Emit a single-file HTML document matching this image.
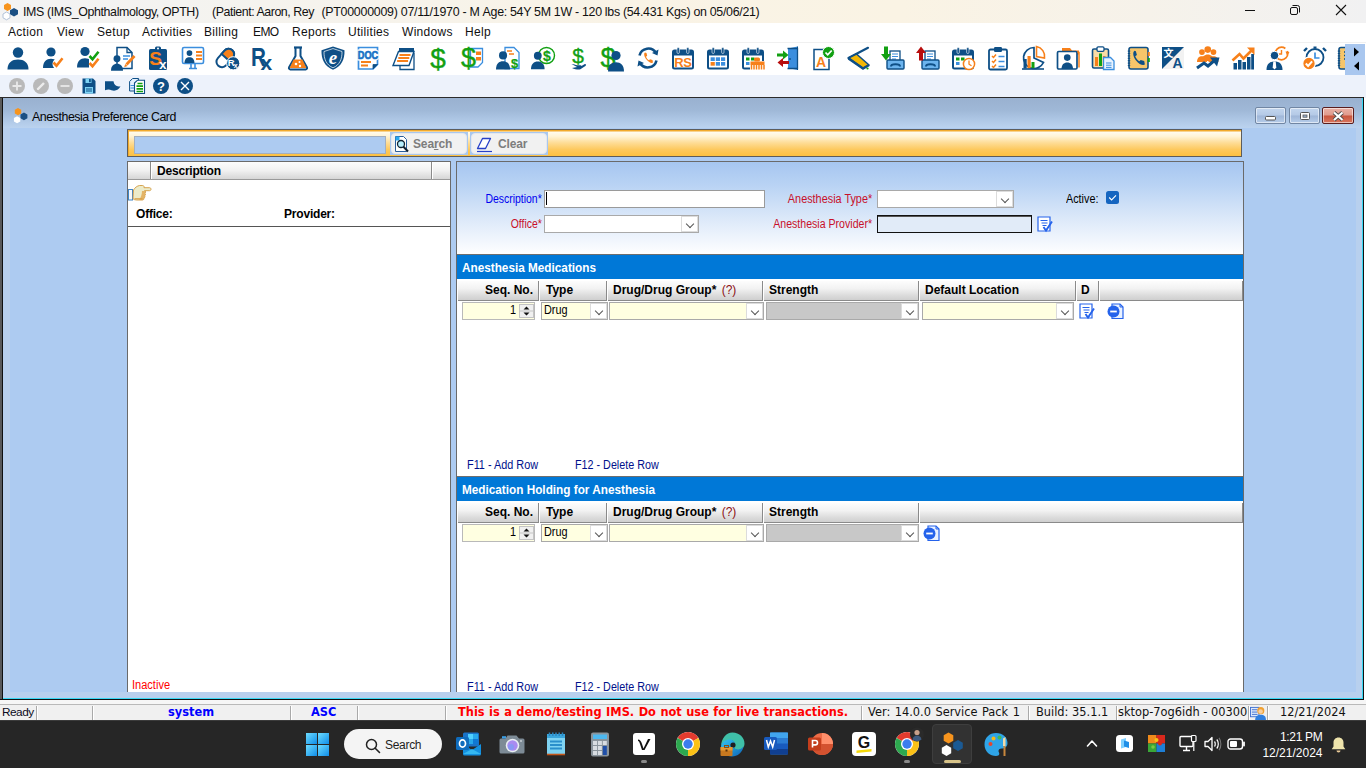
<!DOCTYPE html>
<html lang="en">
<head>
<meta charset="utf-8">
<title>IMS - Anesthesia Preference Card</title>
<style>
*{box-sizing:border-box;margin:0;padding:0}
html,body{width:1366px;height:768px;overflow:hidden;background:#fff;font-family:"Liberation Sans",sans-serif;font-size:12px;color:#000}
.a{position:absolute}
svg{overflow:visible}
.t{position:absolute;white-space:nowrap;line-height:1}
#titlebar{left:0;top:0;width:1366px;height:23px;background:linear-gradient(90deg,#f3f3f3 0,#f4f3f0 180px,#f9f3e6 620px,#faf3e4 900px,#f6f2ea 1150px,#f1f1f2 1366px)}
#menubar{left:0;top:23px;width:1366px;height:19px;background:#fff}
#menubar .t{top:3px;font-size:12px;letter-spacing:.3px;color:#111}
#tb1{left:0;top:42px;width:1366px;height:33px;background:#fff;border-top:1px solid #f0f0f0}
#tb2{left:0;top:75px;width:1366px;height:23px;background:#edf2fb}
#mdi{left:0;top:97px;width:1364px;height:603px;background:#b8d0ee}
#mdititle{left:3px;top:1px;width:1359px;height:30px;background:linear-gradient(180deg,#99b1d0 0,#9fb8d7 40%,#afc8e6 75%,#bbd3ef 100%)}
#client{left:10px;top:127px;width:1346px;height:565px;background:#adcbf1}
#status{left:0;top:704px;width:1366px;height:16px;background:#f0f0f0;border-top:1px solid #b9b9b9;font-family:"DejaVu Sans",sans-serif;font-size:11.400px}
#status .t{top:2px}
#status .sep{position:absolute;top:1px;width:2px;height:14px;background:#fff;border-left:1px solid #a9a9a9}
#taskbar{left:0;top:720px;width:1366px;height:48px;background:#262626}
.wb{position:absolute;top:9px;width:31px;height:17px;border:1px solid #7186a3;border-radius:2px;background:linear-gradient(180deg,#c3d6ee 0,#b4c9e6 48%,#9fb6d8 52%,#b6cdea 100%);box-shadow:inset 0 0 0 1px rgba(255,255,255,.55)}
.wc{width:32px;border-color:#5a1d1d;background:linear-gradient(180deg,#e9b1a6 0,#e09a8c 48%,#c9553d 52%,#d8765f 100%)}
.sbtn{position:absolute;top:2px;height:23px;border:1px solid #a9c7ef;background:#a9c7ef}
.sbtn:before{content:"";position:absolute;left:0;top:0;right:0;bottom:0;border-radius:4px;background:#f1f1f1;border:1px solid #e4e8ee}
.lh{background:linear-gradient(180deg,#fcfcfc 0,#f1f1f1 50%,#d6d6d6 100%);border-bottom:1px solid #9a9a9a}
.nx{display:inline-block;transform:scaleX(.87);transform-origin:left center;font-size:12.5px}
.bx{font-weight:bold}
#l3{transform:scaleX(.905)}#l4{transform:scaleX(.882)}#l5{transform:scaleX(.90)}#f1,#f3{transform:scaleX(.905)}#f2,#f4{transform:scaleX(.897)}
#s1,#s2{display:inline-block;transform:scaleX(.98);transform-origin:left center}
#ldesc,#loff,#lprov{letter-spacing:-.2px}
#linact{display:inline-block;transform:scaleX(.92);transform-origin:left center}
.tt{top:6px;font-size:12.400px;color:#111}
.lbl{position:absolute;white-space:nowrap;line-height:1;font-size:12px}
.red{color:#c8102a}
.blue{color:#0000f0}
.navy{color:#00108c}
.inp{position:absolute;background:#fff;border:1px solid #a9a9a9}
.cmb{position:absolute;background:#fff;border:1px solid #a9a9a9}
.cmb i{position:absolute;right:0;top:0;bottom:0;width:17px;background:#fff;border:1px solid #dcdcdc}
.cmb i:after{content:"";position:absolute;left:4.500px;top:3.500px;width:5px;height:5px;border-right:1px solid #555;border-bottom:1px solid #555;transform:rotate(45deg)}
.yel{background:#ffffe1}
.yel i{background:#fff}
.gry{background:#c8c8c8}
.gry i{background:#fff;border-color:#dcdcdc}
.sechd{position:absolute;width:786px;height:24px;background:#0078d7;color:#fff;font-weight:bold;font-size:12px}
.ghd{position:absolute;width:786px;height:21px;background:#fff}
.ghd b{position:absolute;top:4px;white-space:nowrap;line-height:1;font-size:12px}
.ghd s{position:absolute;top:1px;height:20px;background:linear-gradient(180deg,#fdfdfd 0,#f2f2f2 40%,#dcdcdc 75%,#cfcfcf 100%);border-right:1px solid #8a8a8a;border-bottom:1px solid #8a8a8a;text-decoration:none}
</style>
</head>
<body>
<div id="titlebar" class="a">
<svg class="a" style="left:2px;top:3px" width="17" height="17" viewBox="0 0 17 17"><polygon points="5.5,0 9,2 9,6 5.5,8 2,6 2,2" fill="#f7941d"/><polygon points="12,5 16,7.2 16,11.3 12,13.5 8,11.3 8,7.2" fill="#1b4f83"/><polygon points="4.5,9 8,11 8,14.8 4.5,16.8 1,14.8 1,11" fill="#fff" stroke="#9fb4cf" stroke-width=".8"/></svg>
<span class="t tt" id="ttl" style="left:23px;letter-spacing:-.368px">IMS (IMS_Ophthalmology, OPTH)</span><span class="t tt" style="left:212px;letter-spacing:-.445px">(Patient: Aaron, Rey</span><span class="t tt" style="left:321.400px;letter-spacing:-.252px">(PT00000009) 07/11/1970 - M</span><span class="t tt" style="left:482.600px;letter-spacing:-.3px">Age: 54Y 5M 1W - 120 lbs (54.431 Kgs) on 05/06/21)</span>
<svg class="a" style="left:1244px;top:4px" width="12" height="12" viewBox="0 0 12 12"><path d="M1 6.5h10" stroke="#111" stroke-width="1"/></svg>
<svg class="a" style="left:1289px;top:4px" width="12" height="12" viewBox="0 0 12 12"><rect x="1.5" y="3.5" width="7" height="7" rx="1.5" fill="none" stroke="#111"/><path d="M3.5 1.5h5a2 2 0 0 1 2 2v5" fill="none" stroke="#111"/></svg>
<svg class="a" style="left:1335px;top:4px" width="12" height="12" viewBox="0 0 12 12"><path d="M1 1l10 10M11 1L1 11" stroke="#111" stroke-width="1.1"/></svg>
</div>
<div id="menubar" class="a">
<span class="t" style="left:8px">Action</span><span class="t" style="left:57px">View</span><span class="t" style="left:97px">Setup</span><span class="t" style="left:142px">Activities</span><span class="t" style="left:204px">Billing</span><span class="t" style="left:253px;letter-spacing:-.6px">EMO</span><span class="t" style="left:292px">Reports</span><span class="t" style="left:348px">Utilities</span><span class="t" style="left:402px">Windows</span><span class="t" style="left:465px">Help</span>
</div>
<div id="tb1" class="a">
<svg class="a" style="left:6px;top:3px" width="24" height="24" viewBox="0 0 24 24"><circle cx="12" cy="6.5" r="5.2" fill="#0e4f86"/><path d="M1.5 23.5c0-7 4.5-10 10.5-10s10.5 3 10.5 10z" fill="#0e4f86"/></svg>
<svg class="a" style="left:41px;top:3px" width="24" height="24" viewBox="0 0 24 24"><g transform="translate(2 1) scale(1.0)"><circle cx="8" cy="5" r="4.6" fill="#0e4f86"/><path d="M0 21c0-6.5 3.4-9.3 8-9.3s8 2.8 8 9.3z" fill="#0e4f86"/></g><circle cx="17.5" cy="18" r="6" fill="#fff"/><path d="M12.5 16.5l3 3.2l6 -7.5" fill="none" stroke="#f7801a" stroke-width="2.6"/></svg>
<svg class="a" style="left:76px;top:3px" width="24" height="24" viewBox="0 0 24 24"><g transform="translate(1 0.5) scale(1.0)"><circle cx="8" cy="5" r="4.6" fill="#0e4f86"/><path d="M0 21c0-6.5 3.4-9.3 8-9.3s8 2.8 8 9.3z" fill="#0e4f86"/></g><path d="M13 8l11 0 0 16 -11 0z" fill="#fff"/><path d="M13.5 10l3 3.2l6 -7.5" fill="none" stroke="#12a012" stroke-width="2.6"/><path d="M13.5 17l3 3.2l6 -7.5" fill="none" stroke="#f7801a" stroke-width="2.6"/></svg>
<svg class="a" style="left:111px;top:3px" width="24" height="24" viewBox="0 0 24 24"><path d="M6 1.5h10l5 5v16H6z" fill="#fff" stroke="#0e4f86" stroke-width="1.5"/><path d="M16 1.5v5h5" fill="none" stroke="#0e4f86" stroke-width="1.3"/><path d="M12 10h7M12 13h5" stroke="#3b8ede" stroke-width="1.4"/><g transform="translate(0 9) scale(0.75)"><circle cx="8" cy="5" r="4.6" fill="#0e4f86"/><path d="M0 21c0-6.5 3.4-9.3 8-9.3s8 2.8 8 9.3z" fill="#0e4f86"/></g><path d="M15.5 18.500l8-8.500" stroke="#f7801a" stroke-width="2.800"/><path d="M13.200 21.200l1-3.300 2.300 2.200z" fill="#f7801a"/></svg>
<svg class="a" style="left:146px;top:3px" width="24" height="24" viewBox="0 0 24 24"><rect x="3" y="3" width="18" height="21" rx="1.5" fill="#0e4f86"/><rect x="9" y="0.5" width="6" height="5" rx="1.5" fill="#0e4f86"/><circle cx="12" cy="2.6" r="1" fill="#fff"/><text x="9.5" y="19" font-family="Liberation Sans,sans-serif" font-size="19" font-weight="bold" fill="#f7801a" text-anchor="middle">S</text><text x="16.8" y="22.5" font-family="Liberation Sans,sans-serif" font-size="13" font-weight="bold" fill="#fff" text-anchor="middle">x</text></svg>
<svg class="a" style="left:181px;top:3px" width="24" height="24" viewBox="0 0 24 24"><rect x="1.5" y="1.5" width="21" height="16" rx="1.5" fill="#fff" stroke="#3b8ede" stroke-width="1.6"/><path d="M8 22.5h8M10 18v4M14 18v4" stroke="#3b8ede" stroke-width="1.6"/><g transform="translate(3.5 4) scale(0.62)"><circle cx="8" cy="5" r="4.6" fill="#0e4f86"/><path d="M0 21c0-6.5 3.4-9.3 8-9.3s8 2.8 8 9.3z" fill="#0e4f86"/></g><path d="M15 6h6M15 9.5h6M15 13h6" stroke="#f7801a" stroke-width="2"/></svg>
<svg class="a" style="left:216px;top:3px" width="24" height="24" viewBox="0 0 24 24"><g transform="rotate(-48 10 12)"><rect x="-1" y="6" width="21" height="11" rx="5.5" fill="#fff" stroke="#0e4f86" stroke-width="2"/><path d="M10 6h4.5a5.5 5.500 0 0 1 0 11H10z" fill="#f7801a" stroke="#0e4f86" stroke-width="2"/></g><circle cx="17.2" cy="17.3" r="6.6" fill="#0e4f86" stroke="#fff" stroke-width="1"/><text x="15.3" y="20.3" font-family="Liberation Sans,sans-serif" font-size="9.5" font-weight="bold" fill="#fff" text-anchor="middle">R</text><text x="19.8" y="22" font-family="Liberation Sans,sans-serif" font-size="7" font-weight="bold" fill="#fff" text-anchor="middle">x</text></svg>
<svg class="a" style="left:251px;top:3px" width="24" height="24" viewBox="0 0 24 24"><text transform="translate(0 20.300) scale(.78 1)" font-family="Liberation Sans,sans-serif" font-size="26.500" font-weight="bold" fill="#0e4f86">R</text><text x="9.500" y="24" font-family="Liberation Sans,sans-serif" font-size="21" font-weight="bold" fill="#0e4f86">x</text></svg>
<svg class="a" style="left:286px;top:3px" width="24" height="24" viewBox="0 0 24 24"><path d="M9.5 2v8L3 21.5a1.5 1.5 0 0 0 1.3 2h15.4a1.5 1.5 0 0 0 1.3-2L14.5 10V2" fill="#fff" stroke="#0e4f86" stroke-width="2"/><path d="M7.6 13.5h8.8l4 8.5H3.6z" fill="#f7801a"/><path d="M8 1.5h8" stroke="#0e4f86" stroke-width="2.2"/><circle cx="10" cy="18" r="1.3" fill="#fff"/><circle cx="14" cy="20" r="1.2" fill="#fff"/><circle cx="13.5" cy="16" r="1" fill="#fff"/></svg>
<svg class="a" style="left:321px;top:3px" width="24" height="24" viewBox="0 0 24 24"><path d="M12 0.500l11.500 3.700c.3 9-2.900 16-11.500 19.500C3.400 20.200.2 13.200.5 4.200z" fill="#0e4f86"/><path d="M12 2.600l9 2.900c.2 7.500-2.300 13.500-9 16.300-6.700-2.800-9.200-8.800-9-16.300z" fill="none" stroke="#fff" stroke-width=".7"/><text x="12" y="17.500" font-family="Liberation Serif,serif" font-size="19" font-weight="bold" font-style="italic" fill="#fff" text-anchor="middle">e</text></svg>
<svg class="a" style="left:356px;top:3px" width="24" height="24" viewBox="0 0 24 24"><path d="M2.500 1.500h19v17l-4.500 4.500h-14.500z" fill="#fff" stroke="#3b8ede" stroke-width="1.700"/><path d="M21.500 18.500h-4.500v4.500z" fill="#0e4f86" stroke="#0e4f86" stroke-width=".8"/><text transform="translate(12 13) scale(.8 1)" font-family="Liberation Sans,sans-serif" font-size="11.500" font-weight="bold" fill="#fff" stroke="#fff" stroke-width="3" text-anchor="middle">DOC</text><text transform="translate(12 13) scale(.8 1)" font-family="Liberation Sans,sans-serif" font-size="11.500" font-weight="bold" fill="#1673c6" stroke="#1673c6" stroke-width=".7" text-anchor="middle">DOC</text><path d="M5 16h10M5 19.500h7" stroke="#f7801a" stroke-width="1.800"/></svg>
<svg class="a" style="left:391px;top:3px" width="24" height="24" viewBox="0 0 24 24"><path d="M9 7.500h14v16h-14z" fill="#fff" stroke="#0e4f86" stroke-width="1.300"/><path d="M8 2h15v4h-15z" fill="#0e4f86"/><path d="M7.500 5.500h15.500l-5 14h-16z" fill="#fff" stroke="#0e4f86" stroke-width="1.400"/><path d="M8.500 9h11M7.300 12h11M6.100 15h11" stroke="#f7801a" stroke-width="1.800"/></svg>
<svg class="a" style="left:426px;top:3px" width="24" height="24" viewBox="0 0 24 24"><text x="12" y="21.5" font-family="Liberation Sans,sans-serif" font-size="28" font-weight="normal" fill="#12a012" stroke="#12a012" stroke-width="0.35" text-anchor="middle">$</text></svg>
<svg class="a" style="left:461px;top:3px" width="24" height="24" viewBox="0 0 24 24"><path d="M9.500 2.500h12v14l-4.500 4.500h-7.500z" fill="#fff" stroke="#3b8ede" stroke-width="1.300"/><rect x="15" y="5.500" width="5" height="3.500" fill="#f7801a"/><rect x="15" y="11" width="5" height="3.500" fill="#f7801a"/><text x="7.5" y="21" font-family="Liberation Sans,sans-serif" font-size="27" font-weight="normal" fill="#12a012" stroke="#12a012" stroke-width="0.35" text-anchor="middle">$</text></svg>
<svg class="a" style="left:496px;top:3px" width="24" height="24" viewBox="0 0 24 24"><path d="M9 1.500h9l5 5v16h-14z" fill="#fff" stroke="#3b8ede" stroke-width="1.300"/><path d="M11 5h5M13 8h5" stroke="#f7801a" stroke-width="1.600"/><g transform="translate(0 5) scale(0.88)"><circle cx="8" cy="5" r="4.6" fill="#0e4f86"/><path d="M0 21c0-6.5 3.4-9.3 8-9.3s8 2.8 8 9.3z" fill="#0e4f86"/></g><text x="18.5" y="22" font-family="Liberation Sans,sans-serif" font-size="13" font-weight="bold" fill="#12a012" stroke="#12a012" stroke-width="0.2" text-anchor="middle">$</text></svg>
<svg class="a" style="left:531px;top:3px" width="24" height="24" viewBox="0 0 24 24"><circle cx="15.500" cy="9.500" r="8" fill="#fff" stroke="#12a012" stroke-width="1.400"/><text x="16" y="15" font-family="Liberation Sans,sans-serif" font-size="14" font-weight="bold" fill="#12a012" stroke="#12a012" stroke-width="0.2" text-anchor="middle">$</text><g transform="translate(0 5.5) scale(0.85)"><circle cx="8" cy="5" r="4.6" fill="#0e4f86"/><path d="M0 21c0-6.5 3.4-9.3 8-9.3s8 2.8 8 9.3z" fill="#0e4f86"/></g></svg>
<svg class="a" style="left:566px;top:3px" width="24" height="24" viewBox="0 0 24 24"><text x="12" y="16.5" font-family="Liberation Sans,sans-serif" font-size="21" font-weight="normal" fill="#12a012" stroke="#12a012" stroke-width="0.35" text-anchor="middle">$</text><path d="M5.500 18c3 0 3.500 1.200 6 1.200h3c1.300 0 1.300 1.800-.4 1.800h-3M15 20.200l3.500-2c1.300-.4 2.200.8.900 1.700l-5 3.300c-1.300.7-5 .4-8.400-1.200z" fill="#0e4f86"/></svg>
<svg class="a" style="left:601px;top:3px" width="24" height="24" viewBox="0 0 24 24"><text x="7" y="21" font-family="Liberation Sans,sans-serif" font-size="27" font-weight="normal" fill="#12a012" stroke="#12a012" stroke-width="0.35" text-anchor="middle">$</text><g transform="translate(7 4.5) scale(1.0)"><circle cx="8" cy="5" r="4.6" fill="#0e4f86"/><path d="M0 21c0-6.5 3.4-9.3 8-9.3s8 2.8 8 9.3z" fill="#0e4f86"/></g></svg>
<svg class="a" style="left:636px;top:3px" width="24" height="24" viewBox="0 0 24 24"><path d="M3.500 9.500a9 9 0 0 1 16.500-2.500" fill="none" stroke="#0e4f86" stroke-width="2.600"/><path d="M20.500 14.500a9 9 0 0 1-16.500 2.500" fill="none" stroke="#0e4f86" stroke-width="2.600"/><path d="M22.500 3.500l-1 6-5.500-2.500z" fill="#0e4f86"/><path d="M1.500 20.500l1-6 5.500 2.500z" fill="#0e4f86"/><path d="M9 6.500c-1.500 1-1 4 1.500 7s5 4 6.500 3l-.5-2.500-2.500-.8-1 1c-1-.5-2.500-2-3-3.500l1.200-1-.700-2.700z" fill="#f7801a"/></svg>
<svg class="a" style="left:671px;top:3px" width="24" height="24" viewBox="0 0 24 24"><rect x="2" y="4.5" width="20" height="18" rx="1.5" fill="#fff" stroke="#0e4f86" stroke-width="2"/><rect x="2" y="4.5" width="20" height="5" fill="#0e4f86"/><rect x="6" y="1.5" width="2.4" height="6" rx="1.2" fill="#0e4f86" stroke="#fff" stroke-width=".6"/><rect x="15.6" y="1.5" width="2.4" height="6" rx="1.2" fill="#0e4f86" stroke="#fff" stroke-width=".6"/><text x="12" y="20.800" font-family="Liberation Sans,sans-serif" font-size="13" font-weight="bold" fill="#f7801a" text-anchor="middle" letter-spacing="-.4">RS</text></svg>
<svg class="a" style="left:706px;top:3px" width="24" height="24" viewBox="0 0 24 24"><rect x="2" y="4.5" width="20" height="18" rx="1.5" fill="#fff" stroke="#0e4f86" stroke-width="2"/><rect x="2" y="4.5" width="20" height="5" fill="#0e4f86"/><rect x="6" y="1.5" width="2.4" height="6" rx="1.2" fill="#0e4f86" stroke="#fff" stroke-width=".6"/><rect x="15.6" y="1.5" width="2.4" height="6" rx="1.2" fill="#0e4f86" stroke="#fff" stroke-width=".6"/><rect x="4.6" y="11.3" width="4.2" height="3.7" fill="#3b8ede"/><rect x="9.8" y="11.3" width="4.2" height="3.7" fill="#3b8ede"/><rect x="15.0" y="11.3" width="4.2" height="3.7" fill="#3b8ede"/><rect x="4.6" y="16.0" width="4.2" height="3.7" fill="#f7801a"/><rect x="9.8" y="16.0" width="4.2" height="3.7" fill="#3b8ede"/><rect x="15.0" y="16.0" width="4.2" height="3.7" fill="#3b8ede"/></svg>
<svg class="a" style="left:741px;top:3px" width="24" height="24" viewBox="0 0 24 24"><rect x="2" y="4.5" width="20" height="18" rx="1.5" fill="#fff" stroke="#0e4f86" stroke-width="2"/><rect x="2" y="4.5" width="20" height="5" fill="#0e4f86"/><rect x="6" y="1.5" width="2.4" height="6" rx="1.2" fill="#0e4f86" stroke="#fff" stroke-width=".6"/><rect x="15.6" y="1.5" width="2.4" height="6" rx="1.2" fill="#0e4f86" stroke="#fff" stroke-width=".6"/><rect x="5" y="11.500" width="3.500" height="3" fill="#12a012"/><rect x="10" y="11.500" width="3.500" height="3" fill="#12a012"/><rect x="5" y="16" width="3.500" height="3" fill="#3b8ede"/><rect x="9" y="15" width="15" height="9" fill="#fff"/><rect x="13" y="11.500" width="6" height="4" rx="1.500" fill="#f7801a"/><rect x="9.500" y="15.500" width="14" height="3.500" fill="#f7801a"/><path d="M10.500 19v4.500M13 19v4.500M15.500 19v4.500M18 19v4.500M20.500 19v4.500M23 19v4.500" stroke="#f7801a" stroke-width="1.500"/></svg>
<svg class="a" style="left:776px;top:3px" width="24" height="24" viewBox="0 0 24 24"><path d="M12 2.500l9.500-2v23.500l-9.500-2z" fill="#3b8ede"/><path d="M11.500 2.500h10v20h-10" fill="none" stroke="#0e4f86" stroke-width="1.300"/><path d="M21.500 0.500v23.500" stroke="#0e4f86" stroke-width="1"/><path d="M1 7.500h6v-3l5.500 4.500-5.500 4.500v-3h-6z" fill="#12a012"/><path d="M13 15h-6v-3l-5.500 4.500 5.500 4.500v-3h6z" fill="#b80d0d"/><circle cx="14" cy="13" r=".9" fill="#0e4f86"/></svg>
<svg class="a" style="left:811px;top:3px" width="24" height="24" viewBox="0 0 24 24"><path d="M3 3.500h9l6 6v14h-15z" fill="#fff" stroke="#0e4f86" stroke-width="1.500"/><text x="10" y="21" font-family="Liberation Sans,sans-serif" font-size="14" font-weight="bold" fill="#f7801a" text-anchor="middle">A</text><circle cx="17.500" cy="6.500" r="6" fill="#12a012" stroke="#fff" stroke-width="1"/><path d="M14.500 6.500l2.200 2.300 4-4.300" fill="none" stroke="#fff" stroke-width="1.800"/></svg>
<svg class="a" style="left:846px;top:3px" width="24" height="24" viewBox="0 0 24 24"><path d="M22 1.800L2.500 12" fill="none" stroke="#0e4f86" stroke-width="2.200" stroke-linecap="round"/><path d="M2.500 12l8-4 12.500 11-6 3.500z" fill="#f2b705" stroke="#0e4f86" stroke-width="1.600" stroke-linejoin="round"/><path d="M2.500 12.500l14.500 10 6-3.500" fill="none" stroke="#0e4f86" stroke-width="2.400" stroke-linejoin="round"/><circle cx="21.500" cy="22.500" r="1.100" fill="#12a012"/></svg>
<svg class="a" style="left:881px;top:3px" width="24" height="24" viewBox="0 0 24 24"><rect x="9" y="5" width="10" height="11" fill="#fff" stroke="#0e4f86" stroke-width="1.3"/><path d="M11 8h6M11 10.5h6M11 13h4" stroke="#3b8ede" stroke-width="1.2"/><rect x="6" y="14" width="17" height="9" rx="1" fill="#6cb4ee" stroke="#0e4f86" stroke-width="1.4"/><path d="M10 20.5c0-3 9-3 9 0" stroke="#0e4f86" stroke-width="2" fill="none"/><path d="M2.500 0.500h4v7.500h3l-5 6.500-5-6.500h3z" fill="#12a012" transform="translate(.5 0)"/></svg>
<svg class="a" style="left:916px;top:3px" width="24" height="24" viewBox="0 0 24 24"><rect x="9" y="5" width="10" height="11" fill="#fff" stroke="#0e4f86" stroke-width="1.3"/><path d="M11 8h6M11 10.5h6M11 13h4" stroke="#3b8ede" stroke-width="1.2"/><rect x="6" y="14" width="17" height="9" rx="1" fill="#6cb4ee" stroke="#0e4f86" stroke-width="1.4"/><path d="M10 20.5c0-3 9-3 9 0" stroke="#0e4f86" stroke-width="2" fill="none"/><path d="M2.500 14.500h4v-7.500h3l-5-6.500-5 6.500h3z" fill="#b80d0d" transform="translate(.5 0)"/></svg>
<svg class="a" style="left:951px;top:3px" width="24" height="24" viewBox="0 0 24 24"><rect x="2" y="4.5" width="20" height="18" rx="1.5" fill="#fff" stroke="#0e4f86" stroke-width="2"/><rect x="2" y="4.5" width="20" height="5" fill="#0e4f86"/><rect x="6" y="1.5" width="2.4" height="6" rx="1.2" fill="#0e4f86" stroke="#fff" stroke-width=".6"/><rect x="15.6" y="1.5" width="2.4" height="6" rx="1.2" fill="#0e4f86" stroke="#fff" stroke-width=".6"/><rect x="5" y="11.500" width="3.500" height="3" fill="#12a012"/><rect x="10" y="11.500" width="3.500" height="3" fill="#12a012"/><rect x="5" y="16" width="3.500" height="3" fill="#3b8ede"/><circle cx="18" cy="18" r="5.600" fill="#fff" stroke="#f7801a" stroke-width="1.500"/><path d="M18 14.500v3.700l2.500 1.500" fill="none" stroke="#f7801a" stroke-width="1.300"/></svg>
<svg class="a" style="left:986px;top:3px" width="24" height="24" viewBox="0 0 24 24"><rect x="3" y="3.500" width="18" height="20" rx="1.500" fill="#fff" stroke="#0e4f86" stroke-width="1.800"/><rect x="8" y="1" width="8" height="5" rx="1.200" fill="#0e4f86"/><path d="M6 10l1.500 1.500 2.500-3M6 15l1.500 1.500 2.500-3M6 20l1.500 1.500 2.500-3" fill="none" stroke="#f7801a" stroke-width="1.500"/><path d="M12.500 10.500h6M12.500 15.500h6M12.500 20.500h6" stroke="#3b8ede" stroke-width="1.600"/></svg>
<svg class="a" style="left:1021px;top:3px" width="24" height="24" viewBox="0 0 24 24"><path d="M13 1.500a10.500 10.500 0 1 0 9.500 15l-9.500-4.500z" fill="#fff" stroke="#0e4f86" stroke-width="1.700"/><path d="M15.500 0.500a10 10 0 0 1 8 11.500l-8-1.500z" fill="#fff" stroke="#f7801a" stroke-width="1.600"/><rect x="2.500" y="13" width="3.200" height="9.500" fill="#0e4f86"/><rect x="6.500" y="10" width="3.200" height="12.500" fill="#f7801a"/><rect x="10.500" y="16" width="3" height="6.500" fill="#12a012"/><path d="M1 23h22" stroke="#0e4f86" stroke-width="1.600"/></svg>
<svg class="a" style="left:1056px;top:3px" width="24" height="24" viewBox="0 0 24 24"><path d="M6 2h8l2 2.500h7v4h-17z" fill="#f7801a"/><rect x="1.500" y="5.500" width="19.500" height="17.500" rx="1.200" fill="#fff" stroke="#0e4f86" stroke-width="1.700"/><path d="M21.500 6.500h1.500v15" stroke="#f7801a" stroke-width="1.500" fill="none"/><g transform="translate(5.5 8) scale(0.72)"><circle cx="8" cy="5" r="4.6" fill="#0e4f86"/><path d="M0 21c0-6.5 3.4-9.3 8-9.3s8 2.8 8 9.3z" fill="#0e4f86"/></g></svg>
<svg class="a" style="left:1091px;top:3px" width="24" height="24" viewBox="0 0 24 24"><rect x="1.500" y="3" width="16" height="19" rx="1.500" fill="#f9dca6" stroke="#0e4f86" stroke-width="1.600"/><rect x="6" y="0.800" width="7" height="4.500" rx="1.200" fill="#fff" stroke="#0e4f86" stroke-width="1.300"/><rect x="4" y="11" width="3" height="9" fill="#f7801a"/><rect x="8" y="7.500" width="3" height="12.500" fill="#12a012"/><rect x="12" y="10" width="2.500" height="10" fill="#f7801a"/><path d="M12.500 11.500h7l3.500 3.500v8.500h-10.500z" fill="#e8f3ff" stroke="#3b8ede" stroke-width="1.300"/><path d="M15 17h5.500M15 19.200h5.500M15 21.400h5.500" stroke="#3b8ede" stroke-width="1"/></svg>
<svg class="a" style="left:1126px;top:3px" width="24" height="24" viewBox="0 0 24 24"><rect x="3" y="1.500" width="19" height="21.500" rx="2" fill="#f6c56a" stroke="#0e4f86" stroke-width="1.600"/><path d="M3 4.500v16" stroke="#0e4f86" stroke-width="2.400" stroke-dasharray="1.200 1.200"/><path d="M22.800 6v4" stroke="#f7801a" stroke-width="2"/><path d="M22.800 12v4" stroke="#12a012" stroke-width="2"/><g transform="translate(13 11.800) scale(1.300) translate(-13 -11.500)"><path d="M9.500 6c-1.500 1-1.200 4.500 1.200 7.500s5.300 4.200 6.800 3.200l-.5-2.700-2.700-.8-1 1c-1.200-.6-2.600-2.200-3.200-3.800l1.300-1-.8-3z" fill="#0e4f86"/></g></svg>
<svg class="a" style="left:1161px;top:3px" width="24" height="24" viewBox="0 0 24 24"><path d="M1 1h22v22h-22z" fill="#f2f2f2"/><path d="M1 1h22l-22 22z" fill="#0e4f86"/><text x="7.500" y="11" font-family="Liberation Sans,Noto Sans CJK SC,sans-serif" font-size="10" font-weight="bold" fill="#fff" text-anchor="middle">文</text><text x="16.500" y="22" font-family="Liberation Sans,sans-serif" font-size="14" font-weight="bold" fill="#0e4f86" text-anchor="middle">A</text></svg>
<svg class="a" style="left:1196px;top:3px" width="24" height="24" viewBox="0 0 24 24"><g transform="translate(1 3) scale(0.62)"><circle cx="8" cy="5" r="4.6" fill="#f7801a"/><path d="M0 21c0-6.5 3.4-9.3 8-9.3s8 2.8 8 9.3z" fill="#f7801a"/></g><g transform="translate(12.5 3) scale(0.62)"><circle cx="8" cy="5" r="4.6" fill="#f7801a"/><path d="M0 21c0-6.5 3.4-9.3 8-9.3s8 2.8 8 9.3z" fill="#f7801a"/></g><g transform="translate(6 0) scale(0.72)"><circle cx="8" cy="5" r="4.6" fill="#f7801a"/><path d="M0 21c0-6.5 3.4-9.3 8-9.3s8 2.8 8 9.3z" fill="#f7801a"/></g><path d="M1 22l7-5 4 3 7-6" fill="none" stroke="#0e4f86" stroke-width="3"/><path d="M14 11.500h9.500l-2.500 9z" fill="#0e4f86"/></svg>
<svg class="a" style="left:1231px;top:3px" width="24" height="24" viewBox="0 0 24 24"><rect x="2.500" y="17" width="3.500" height="6.500" fill="#0e4f86"/><rect x="7" y="14" width="3.500" height="9.500" fill="#0e4f86"/><rect x="11.500" y="16" width="3.500" height="7.500" fill="#0e4f86"/><rect x="16" y="11" width="3.500" height="12.500" fill="#0e4f86"/><rect x="20.200" y="8" width="2.800" height="15.500" fill="#0e4f86"/><path d="M1.500 14.500l7-6.500 4 4.500 8-8" fill="none" stroke="#f7801a" stroke-width="2.600"/><path d="M16 1.500h7.500v7.500z" fill="#f7801a"/></svg>
<svg class="a" style="left:1266px;top:3px" width="24" height="24" viewBox="0 0 24 24"><circle cx="15.500" cy="7.500" r="6.300" fill="#fff" stroke="#f7801a" stroke-width="1.700" stroke-dasharray="15 3"/><path d="M15.500 4v4h-2.500" fill="none" stroke="#f7801a" stroke-width="1.400"/><path d="M21 9.500l2.500-3.500-4-.5z" fill="#f7801a"/><circle cx="8.500" cy="9.500" r="4.200" fill="#0e4f86" stroke="#fff" stroke-width="1"/><path d="M0.500 24c0-6 3-8.500 8-8.500s8 2.500 8 8.500z" fill="#0e4f86"/><path d="M7.300 15.500h2.400l.6 6-1.800 2-1.800-2z" fill="#fff"/></svg>
<svg class="a" style="left:1301px;top:3px" width="24" height="24" viewBox="0 0 24 24"><circle cx="14" cy="11.500" r="8.500" fill="#fff" stroke="#0e4f86" stroke-width="1.800"/><path d="M14 6.500v5.500h4.500" fill="none" stroke="#3b8ede" stroke-width="1.700"/><path d="M6 2l-3 3M22 2l3 3" stroke="#0e4f86" stroke-width="2.400"/><path d="M12.500 1.500h3" stroke="#0e4f86" stroke-width="2"/><circle cx="8" cy="17.500" r="6.300" fill="#f7801a" stroke="#fff" stroke-width="1.300"/><path d="M4.800 17.500l2.300 2.400 4-4.600" fill="none" stroke="#fff" stroke-width="2"/></svg>
<svg class="a" style="left:1336px;top:3px" width="24" height="24" viewBox="0 0 24 24"><rect x="3" y="1.500" width="19" height="21.500" rx="2" fill="#f6c56a" stroke="#0e4f86" stroke-width="1.600"/><path d="M3 4.500v16" stroke="#0e4f86" stroke-width="2.400" stroke-dasharray="1.200 1.200"/><path d="M8 6h5M8 9.500h5M8 13h5" stroke="#0e4f86" stroke-width="1.500"/></svg>
<div class="a" style="left:1345px;top:1px;width:20px;height:31px;background:#a9c7ef"><svg class="a" style="left:0;top:0" width="20" height="31" viewBox="0 0 20 31"><path d="M9 3.500l5 4.500-5 4.500z" fill="#000"/><path d="M14 17.500l-5 4.500 5 4.500z" fill="#000"/></svg></div>
</div>
<div id="tb2" class="a">
<svg class="a" style="left:9px;top:3px" width="16" height="16" viewBox="0 0 16 16"><circle cx="8" cy="8" r="8" fill="#b9b9b9"/><path d="M8 3.500v9M3.500 8h9" stroke="#e9e9e9" stroke-width="1.800"/></svg>
<svg class="a" style="left:33px;top:3px" width="16" height="16" viewBox="0 0 16 16"><circle cx="8" cy="8" r="8" fill="#b9b9b9"/><path d="M4.500 11.500l6.500-6.500" stroke="#ececec" stroke-width="2.400"/><path d="M4 12l.3-1.500 1.200 1.200z" fill="#ececec"/></svg>
<svg class="a" style="left:57px;top:3px" width="16" height="16" viewBox="0 0 16 16"><circle cx="8" cy="8" r="8" fill="#b9b9b9"/><path d="M3.500 8h9" stroke="#e9e9e9" stroke-width="1.800"/></svg>
<svg class="a" style="left:81px;top:3px" width="16" height="16" viewBox="0 0 16 16"><path d="M1.500 0.500h10.500l2.500 2.500v12.500h-13z" fill="#0e4f86"/><rect x="4.500" y="0.500" width="6" height="4.500" fill="#7dd3f5"/><rect x="8" y="1" width="1.800" height="3.200" fill="#0e4f86"/><rect x="4" y="9" width="8" height="6.500" fill="#7dd3f5"/><path d="M5 11h6M5 13h6" stroke="#0e4f86" stroke-width="1"/></svg>
<svg class="a" style="left:105px;top:3px" width="16" height="16" viewBox="0 0 16 16"><path d="M0 3.300L8.500 3.300C9 7 11.500 9.300 15.500 8.300C14 12 10 13.500 6.500 12.200C4.500 11.400 2.500 11.400 0 12.300Z" fill="#0e4f86"/></svg>
<svg class="a" style="left:129px;top:3px" width="16" height="16" viewBox="0 0 16 16"><path d="M0.600 3.500l3-3h6v12.500h-9z" fill="#e4f1ff" stroke="#0e4f86" stroke-width="1"/><path d="M1.500 7.500h3.500M1.500 10h3.500" stroke="#3b8ede" stroke-width="1.200"/><path d="M5.500 5l3-2.800h7v13.300h-10z" fill="#fff" stroke="#0e4f86" stroke-width="1.100"/><path d="M8.500 5.500h5M7.500 8.200h6.500M7.500 10.900h6.500M7.500 13.500h6.500" stroke="#12a012" stroke-width="1.700"/></svg>
<svg class="a" style="left:153px;top:3px" width="16" height="16" viewBox="0 0 16 16"><circle cx="8" cy="8" r="8" fill="#0e4f86"/><text x="8" y="12.500" font-family="Liberation Sans,sans-serif" font-size="13" font-weight="bold" fill="#fff" text-anchor="middle">?</text></svg>
<svg class="a" style="left:177px;top:3px" width="16" height="16" viewBox="0 0 16 16"><circle cx="8" cy="8" r="8" fill="#0e4f86"/><path d="M4 4l8 8M12 4l-8 8" stroke="#fff" stroke-width="1.400"/></svg>
</div>
<div id="mdi" class="a">
<div class="a" style="left:0;top:0;width:3px;height:603px;background:#5a5a5a;border-right:1px solid #111"></div>
<div class="a" style="left:0;top:0;width:1364px;height:1px;background:#2b2b2b"></div>
<div class="a" style="left:1363px;top:0;width:1px;height:603px;background:#111"></div>
<div class="a" style="left:1362px;top:1px;width:1px;height:601px;background:#38d8f4"></div>
<div class="a" style="left:3px;top:601px;width:1360px;height:1px;background:#38d8f4"></div>
<div class="a" style="left:0;top:602px;width:1364px;height:1px;background:#111"></div>
<div id="mdititle" class="a">
<svg class="a" style="left:9.500px;top:10px" width="15.500" height="15.500" viewBox="0 0 17 17"><polygon points="5.5,0 9,2 9,6 5.5,8 2,6 2,2" fill="#f7941d"/><polygon points="12,5 15.800,7.200 15.800,11.300 12,13.500 8.200,11.300 8.200,7.200" fill="#1b4f83"/><polygon points="4.500,9 8,11 8,14.800 4.500,16.800 1,14.800 1,11" fill="#fff"/></svg>
<span class="t" id="mdit" style="left:29px;top:13px;font-size:12.400px;letter-spacing:-.45px;color:#050505">Anesthesia Preference Card</span>
<div class="wb" style="left:1251.500px"><svg width="31" height="17" viewBox="0 0 31 17" class="a" style="left:0;top:0"><rect x="9.500" y="8.500" width="10" height="3.500" rx="1" fill="#fff" stroke="#555" stroke-width="1"/></svg></div>
<div class="wb" style="left:1285.500px"><svg width="31" height="17" viewBox="0 0 31 17" class="a" style="left:0;top:0"><rect x="10.500" y="4.500" width="9" height="7" rx="1" fill="#fff" stroke="#555" stroke-width="1"/><rect x="13" y="7" width="4" height="2.200" fill="#9db4d2" stroke="#555" stroke-width=".8"/></svg></div>
<div class="wb wc" style="left:1319px"><svg width="32" height="17" viewBox="0 0 32 17" class="a" style="left:0;top:0"><path d="M11 4.500l8.500 7.500M19.500 4.500l-8.500 7.500" stroke="#4a4a4a" stroke-width="3.800"/><path d="M11 4.500l8.500 7.500M19.500 4.500l-8.500 7.500" stroke="#fff" stroke-width="2.200"/></svg></div>
</div>
</div>
<div id="client" class="a">
<div class="a" style="left:0;top:0;width:1346px;height:1px;background:#bad2ee"></div>
<!-- orange search bar -->
<div id="obar" class="a" style="left:117px;top:2px;width:1115px;height:28px;border:1px solid #5c5c5c;box-shadow:inset 1px 1px 0 #f2aa2c;background:linear-gradient(180deg,#f2aa2c 0,#f2aa2c 1px,#fffbee 2px,#fff3d4 25%,#fedc94 50%,#fdc95e 75%,#fdc040 100%)">
<div class="a" style="left:6px;top:6px;width:252px;height:18px;background:#adcbf1;border:1px solid #a3afc0"></div>
<div class="sbtn" style="left:262px;width:78px"><svg class="a" style="left:3px;top:3px" width="16" height="17" viewBox="0 0 16 17"><path d="M1.500 0.500h8l3 3v12h-11z" fill="#fff" stroke="#2a5e9c" stroke-width="1"/><path d="M1.500 0.500h4v4h-4z" fill="#29a8f0"/><circle cx="7" cy="8" r="3.500" fill="#b8f0ff" stroke="#123" stroke-width="1.300"/><path d="M9.500 10.800l4.500 4.700" stroke="#123" stroke-width="2"/></svg><span class="t" style="left:22px;top:5px;font-size:12px;font-weight:bold;color:#7d7d7d;letter-spacing:-.15px">Sea<u>r</u>ch</span></div>
<div class="sbtn" style="left:342px;width:78px"><svg class="a" style="left:5px;top:4px" width="18" height="16" viewBox="0 0 18 16"><path d="M6.500 1.500h8l-5 10h-8z" fill="#fff" stroke="#2740c8" stroke-width="1.300" stroke-linejoin="round"/><path d="M1 14.500h15" stroke="#2740c8" stroke-width="1.200"/></svg><span class="t" style="left:27px;top:5px;font-size:12px;font-weight:bold;color:#7d7d7d;letter-spacing:-.15px">Clear</span></div>
</div>
<!-- left list panel -->
<div id="lp" class="a" style="left:117px;top:34px;width:324px;height:531px;background:#fff;border:1px solid #6a6a6a;border-bottom:0">
<div class="a lh" style="left:0;top:0;width:322px;height:18px"></div>
<div class="a" style="left:22px;top:0;width:1px;height:17px;background:#8a8a8a"></div><div class="a" style="left:23px;top:0;width:1px;height:17px;background:#fff"></div>
<div class="a" style="left:303px;top:0;width:1px;height:17px;background:#8a8a8a"></div><div class="a" style="left:304px;top:0;width:1px;height:17px;background:#fff"></div>
<span class="t" id="ldesc" style="left:29px;top:3px;font-size:12px;font-weight:bold">Description</span>
<svg class="a" style="left:0;top:22px" width="24" height="18" viewBox="0 0 24 18"><rect x="0.500" y="5.500" width="4" height="10.500" fill="#f4f8fc" stroke="#3f86c8" stroke-width="1"/><path d="M5.500 6C7 3.500 9 2 11.500 1.500h3c1.500 0 1.800 1.200 1.500 2.200h5.500c2 0 2 3 0 3h-5c1.500.3 1.500 2.200.2 2.500 1.200.5 1 2.300-.3 2.500.9.600.6 2.200-.7 2.300.5.800 0 2-1.200 2h-6c-1.500 0-2.500-.5-3.500-1.200z" fill="#ecebc9" stroke="#d39a3e" stroke-width=".9"/><path d="M14 7h2.500c1.500.3 1.500 2.200.2 2.500 1.200.5 1 2.300-.3 2.500.9.600.6 2.200-.7 2.300.5.800 0 1.700-1.200 1.700h-3.500c1.800-2 3-5.500 3-9z" fill="#e2aa55" opacity=".85"/><path d="M6.500 14.800h8" stroke="#d9a047" stroke-width="1.200"/></svg>
<span class="t" id="loff" style="left:8px;top:46px;font-size:12px;font-weight:bold">Office:</span>
<span class="t" id="lprov" style="left:156px;top:46px;font-size:12px;font-weight:bold">Provider:</span>
<div class="a" style="left:0;top:64px;width:322px;height:1px;background:#555"></div>
<span class="t" id="linact" style="left:4px;top:517px;font-size:12px;color:#ff0000">Inactive</span>
</div>
<div id="rp" class="a" style="left:446px;top:34px;width:788px;height:531px;background:#fff;border:1px solid #6a6a6a;border-bottom:0">
<div class="a" style="left:0;top:0;width:786px;height:93px;background:linear-gradient(180deg,#a6c6f0 0,#b9d3f4 25%,#dbe8f9 60%,#f6f9fe 90%,#fff 100%)"></div>
</div>
<!--RPI0-->
<span class="lbl nx blue" id="l1" style="right:814px;top:66px;transform-origin:right center">Description*</span>
<div class="inp" style="left:534px;top:63px;width:221px;height:18px;border-color:#9a9a9a"><div class="a" style="left:1px;top:1px;width:1px;height:13px;background:#000"></div></div>
<span class="lbl nx red" id="l2" style="right:814px;top:91px;transform-origin:right center">Office*</span>
<div class="cmb " style="left:534px;top:88px;width:155px;height:18px"><i></i></div>
<span class="lbl nx red" id="l3" style="right:484px;top:66px;transform-origin:right center">Anesthesia Type*</span>
<div class="cmb " style="left:867px;top:63px;width:137px;height:18px"><i></i></div>
<span class="lbl nx red" id="l4" style="right:484px;top:91px;transform-origin:right center">Anesthesia Provider*</span>
<div class="inp" style="left:867px;top:88px;width:155px;height:18px;border:1px solid #111;box-shadow:inset 0 1px 0 #555;background:#e1ebf8"></div>
<svg class="a" style="left:1027px;top:89px" width="17" height="17" viewBox="0 0 17 17"><path d="M1 1h12v14h-12z" fill="#fff" stroke="#2563eb" stroke-width="1.200"/><path d="M3.500 4.500h7M4.500 7h6M5.500 9.500h4" stroke="#2563eb" stroke-width="1.100"/><path d="M6.500 11l2.500 3.500 6-9" fill="none" stroke="#2563eb" stroke-width="1.900"/></svg>
<span class="lbl nx" id="l5" style="left:1056px;top:66px;transform-origin:left center">Active:</span>
<div class="a" style="left:1096px;top:64px;width:13px;height:13px;border-radius:2.500px;background:#1565c0"><svg class="a" style="left:0;top:0" width="13" height="13" viewBox="0 0 13 13"><path d="M3.200 6.500l2.400 2.400 4.400-4.600" fill="none" stroke="#fff" stroke-width="1.100"/></svg></div>
<div class="a" style="left:447px;top:127px;width:786px;height:1px;background:#6e6e6e"></div>
<div class="sechd" style="left:447px;top:128px"><span class="t bx" id="s1" style="left:5px;top:7px">Anesthesia Medications</span></div>
<div class="ghd" style="left:447px;top:153px"><s style="left:1px;width:81px"></s><s style="left:83px;width:67px"></s><s style="left:151px;width:155px"></s><s style="left:307px;width:155px"></s><s style="left:463px;width:156px"></s><s style="left:620px;width:22px"></s><s style="left:643px;width:143px"></s><b style="left:-457px;right:710px;left:auto">Seq. No.</b><b style="left:89px;">Type</b><b style="left:156px;">Drug/Drug Group* <span style="font-weight:normal;color:#8c0f14;margin-left:2px">(?)</span></b><b style="left:312px;">Strength</b><b style="left:468px;">Default Location</b><b style="left:624px;">D</b></div>
<div class="inp yel" style="left:452px;top:175px;width:73px;height:18px;border-color:#b9b9b9"><span class="t nx" style="right:18px;top:1px;transform-origin:right center">1</span><div class="a" style="left:56px;top:1px;width:15px;height:14px;background:#f0f0f0;border:1px solid #c4c4c4"><svg class="a" style="left:0;top:0" width="13" height="12" viewBox="0 0 13 12"><path d="M0 6h13" stroke="#c4c4c4"/><path d="M3.500 4.500l3-3 3 3zM3.500 7.500l3 3 3-3z" fill="#111"/></svg></div></div>
<div class="cmb yel" style="left:531px;top:175px;width:67px;height:18px"><span class="t nx" style="left:2px;top:1px">Drug</span><i></i></div>
<div class="cmb yel" style="left:599px;top:175px;width:155px;height:18px"><i></i></div>
<div class="cmb gry" style="left:756px;top:175px;width:153px;height:18px"><i></i></div>
<div class="cmb yel" style="left:912px;top:175px;width:152px;height:18px"><i></i></div>
<svg class="a" style="left:1069px;top:176px" width="17" height="17" viewBox="0 0 17 17"><path d="M1 1h12v14h-12z" fill="#fff" stroke="#2563eb" stroke-width="1.200"/><path d="M3.500 4.500h7M4.500 7h6M5.500 9.500h4" stroke="#2563eb" stroke-width="1.100"/><path d="M6.500 11l2.500 3.500 6-9" fill="none" stroke="#2563eb" stroke-width="1.900"/></svg>
<svg class="a" style="left:1097px;top:176px" width="17" height="17" viewBox="0 0 17 17"><path d="M5 1h8l3 3v11.500h-11z" fill="#eaf2ff" stroke="#2563eb" stroke-width="1.200"/><path d="M13 1v3h3" fill="none" stroke="#2563eb" stroke-width="1"/><circle cx="6.500" cy="8.500" r="6" fill="#2563eb"/><path d="M3.200 8.500h6.600" stroke="#fff" stroke-width="1.800"/></svg>
<span class="lbl nx navy" id="f1" style="left:457px;top:332px;transform-origin:left center">F11 - Add Row</span>
<span class="lbl nx navy" id="f2" style="left:565px;top:332px;transform-origin:left center">F12 - Delete Row</span>
<div class="a" style="left:447px;top:349px;width:786px;height:1px;background:#6e6e6e"></div>
<div class="sechd" style="left:447px;top:350px"><span class="t bx" id="s2" style="left:5px;top:7px">Medication Holding for Anesthesia</span></div>
<div class="ghd" style="left:447px;top:375px"><s style="left:1px;width:81px"></s><s style="left:83px;width:67px"></s><s style="left:151px;width:155px"></s><s style="left:307px;width:155px"></s><s style="left:463px;width:323px"></s><b style="left:-457px;right:710px;left:auto">Seq. No.</b><b style="left:89px;">Type</b><b style="left:156px;">Drug/Drug Group* <span style="font-weight:normal;color:#8c0f14;margin-left:2px">(?)</span></b><b style="left:312px;">Strength</b></div>
<div class="inp yel" style="left:452px;top:397px;width:73px;height:18px;border-color:#b9b9b9"><span class="t nx" style="right:18px;top:1px;transform-origin:right center">1</span><div class="a" style="left:56px;top:1px;width:15px;height:14px;background:#f0f0f0;border:1px solid #c4c4c4"><svg class="a" style="left:0;top:0" width="13" height="12" viewBox="0 0 13 12"><path d="M0 6h13" stroke="#c4c4c4"/><path d="M3.500 4.500l3-3 3 3zM3.500 7.500l3 3 3-3z" fill="#111"/></svg></div></div>
<div class="cmb yel" style="left:531px;top:397px;width:67px;height:18px"><span class="t nx" style="left:2px;top:1px">Drug</span><i></i></div>
<div class="cmb yel" style="left:599px;top:397px;width:155px;height:18px"><i></i></div>
<div class="cmb gry" style="left:756px;top:397px;width:153px;height:18px"><i></i></div>
<svg class="a" style="left:913px;top:398px" width="17" height="17" viewBox="0 0 17 17"><path d="M5 1h8l3 3v11.500h-11z" fill="#eaf2ff" stroke="#2563eb" stroke-width="1.200"/><path d="M13 1v3h3" fill="none" stroke="#2563eb" stroke-width="1"/><circle cx="6.500" cy="8.500" r="6" fill="#2563eb"/><path d="M3.200 8.500h6.600" stroke="#fff" stroke-width="1.800"/></svg>
<span class="lbl nx navy" id="f3" style="left:457px;top:554px;transform-origin:left center">F11 - Add Row</span>
<span class="lbl nx navy" id="f4" style="left:565px;top:554px;transform-origin:left center">F12 - Delete Row</span>
<!--RPI1-->
</div>
<div class="a" style="left:0;top:700px;width:1366px;height:4px;background:#f6f6f6"></div>
<div id="status" class="a">
<div class="sep" style="left:36px"></div>
<div class="sep" style="left:92px"></div>
<div class="sep" style="left:290px"></div>
<div class="sep" style="left:357px"></div>
<div class="sep" style="left:445px"></div>
<div class="sep" style="left:861px"></div>
<div class="sep" style="left:1028px"></div>
<div class="sep" style="left:1116px"></div>
<div class="sep" style="left:1248px"></div>
<div class="sep" style="left:1267px"></div>
<span class="t" id="st0" style="left:2px;font-family:'Liberation Sans',sans-serif;font-size:11.800px;top:1.500px;color:#0a0a20;letter-spacing:-.5px">Ready</span>
<span class="t" id="st1" style="left:168px;font-weight:bold;color:#0000ff">system</span>
<span class="t" id="st2" style="left:311px;font-weight:bold;color:#0000ff">ASC</span>
<span class="t" id="st3" style="left:458px;word-spacing:.5px;font-weight:bold;color:#ff0000">This is a demo/testing IMS. Do not use for live transactions.</span>
<span class="t" id="st4" style="left:868px;word-spacing:.85px;color:#111">Ver: 14.0.0 Service Pack 1</span>
<span class="t" id="st5" style="left:1036px;color:#111">Build: 35.1.1</span>
<span class="t" id="st6" style="left:1118px;color:#111">sktop-7og6idh - 00300</span>
<svg class="a" style="left:1250px;top:1px" width="16" height="14" viewBox="0 0 17 15"><rect x="0.500" y="1.500" width="9" height="10" fill="#dce9fb" stroke="#3f6fd0" stroke-width="1"/><path d="M2 4h6M2 6.500h6M2 9h6" stroke="#3f6fd0" stroke-width="1"/><circle cx="11.500" cy="5" r="3.800" fill="#f0a030"/><circle cx="11.300" cy="5.800" r="2.400" fill="#f7cfa0"/><path d="M5.500 15c0-4 2.500-5.500 6-5.500s5.500 1.500 5.500 5.500z" fill="#2f7fe0"/></svg>
<span class="t" id="st7" style="left:1280px;color:#111">12/21/2024</span>
</div>
<div id="taskbar" class="a">
<div class="a" style="left:0;top:0;width:1366px;height:1px;background:#3b3b3b"></div>
<svg class="a" style="left:306px;top:13px" width="23" height="23" viewBox="0 0 23 23"><defs><linearGradient id="wg" x1="0" y1="0" x2="1" y2="1"><stop offset="0" stop-color="#6ddcff"/><stop offset="1" stop-color="#0f8de8"/></linearGradient></defs><rect x="0" y="0" width="11" height="11" fill="url(#wg)"/><rect x="12" y="0" width="11" height="11" fill="url(#wg)"/><rect x="0" y="12" width="11" height="11" fill="url(#wg)"/><rect x="12" y="12" width="11" height="11" fill="url(#wg)"/></svg>
<div class="a" style="left:344px;top:9px;width:98px;height:30px;border-radius:15px;background:#f4f4f4"><svg class="a" style="left:21px;top:9px" width="16" height="16" viewBox="0 0 16 16"><circle cx="6.500" cy="6.500" r="5" fill="none" stroke="#222" stroke-width="1.500"/><path d="M10.200 10.200l4.300 4.300" stroke="#222" stroke-width="1.600" stroke-linecap="round"/></svg><span class="t" id="tks" style="left:41px;top:10px;font-size:12px;color:#1e1e1e;letter-spacing:-.3px">Search</span></div>
<svg class="a" style="left:456px;top:12px" width="25" height="24" viewBox="0 0 25 24"><rect x="7" y="0.500" width="16" height="14" rx="1.500" fill="#1a73c8"/><rect x="12" y="2" width="5" height="5" fill="#50d0ff"/><rect x="17" y="2" width="5" height="5" fill="#28a8ea"/><rect x="12" y="7" width="5" height="5" fill="#28a8ea"/><rect x="17" y="7" width="5" height="5" fill="#0f78d4"/><path d="M7 12l9 6 9-6v10a1.500 1.500 0 0 1-1.500 1.500h-15a1.500 1.500 0 0 1-1.500-1.500z" fill="#1490df"/><path d="M7 22l9-5 9 5" fill="#35b8f1"/><rect x="0" y="5" width="13" height="13" rx="1.500" fill="#0f6cbd"/><ellipse cx="6.500" cy="11.500" rx="3" ry="3.600" fill="none" stroke="#fff" stroke-width="1.700"/></svg>
<svg class="a" style="left:500px;top:13px" width="25" height="22" viewBox="0 0 25 22"><path d="M1 5.500h4.500l2-3h9l2.500 3h4a1.500 1.500 0 0 1 1.500 1.500v12a1.500 1.500 0 0 1-1.500 1.500h-22a1.500 1.500 0 0 1-1.500-1.500v-12a1.500 1.500 0 0 1 1.500-1.500z" fill="#7d8b96"/><rect x="2" y="3.200" width="4" height="2.300" fill="#3ca0e6"/><circle cx="12.500" cy="12.500" r="6.800" fill="#e8eef2"/><circle cx="12.500" cy="12.500" r="5.200" fill="#a98bf0"/><circle cx="11" cy="14" r="3" fill="#7a9cf5" opacity=".7"/><circle cx="21" cy="8" r=".9" fill="#cfd6db"/></svg>
<svg class="a" style="left:546px;top:12px" width="20" height="25" viewBox="0 0 20 25"><rect x="1" y="2" width="18" height="21" rx="1.500" fill="#7fd3f2"/><rect x="1" y="2" width="18" height="4" fill="#3aa6dc"/><path d="M3.500 0.500v3.500M6.800 0.500v3.500M10 0.500v3.500M13.200 0.500v3.500M16.500 0.500v3.500" stroke="#2a86c0" stroke-width="1.500"/><path d="M4 9.500h12M4 13h12M4 16.500h12" stroke="#2a8fcb" stroke-width="1.800"/><path d="M1 22.500h18" stroke="#c4561a" stroke-width="1.600"/></svg>
<svg class="a" style="left:590px;top:12px" width="20" height="25" viewBox="0 0 20 25"><rect x="1" y="0.500" width="18" height="24" rx="2" fill="#8a949c"/><rect x="3" y="2.500" width="14" height="4.500" fill="#4db8f0"/><rect x="3.0" y="9" width="4" height="4" fill="#d8dde2"/><rect x="7.9" y="9" width="4" height="4" fill="#d8dde2"/><rect x="12.8" y="9" width="4" height="4" fill="#d8dde2"/><rect x="3.0" y="14" width="4" height="4" fill="#d8dde2"/><rect x="7.9" y="14" width="4" height="4" fill="#d8dde2"/><rect x="3.0" y="19" width="4" height="4" fill="#d8dde2"/><rect x="7.9" y="19" width="4" height="4" fill="#d8dde2"/><rect x="12.800" y="14" width="4" height="9" fill="#1f4fa8"/></svg>
<svg class="a" style="left:633px;top:13px" width="22" height="22" viewBox="0 0 22 22"><rect x="0" y="0" width="22" height="22" rx="3" fill="#fff"/><path d="M5 6.500c2 0 3 1.500 4 4.500l1.500 4.500 4.500-9.500h2.500l-6 11h-2.500l-2-6c-.6-2-1-3-2-3z" fill="#111"/></svg>
<div class="a" style="left:641px;top:40px;width:6px;height:3px;border-radius:1.500px;background:#8a8a8a"></div>
<svg class="a" style="left:675px;top:11px" width="26" height="26" viewBox="0 0 26 26"><g transform="translate(13 13)"><circle r="12" fill="#fff"/><path d="M0 0L-10.39 -6.00A12 12 0 0 1 10.39 -6.00z" fill="#e33b2e"/><path d="M0 0L10.39 -6.00A12 12 0 0 1 0 12z" fill="#fbc116"/><path d="M0 0L0 12A12 12 0 0 1 -10.39 -6.00z" fill="#2da94f"/><circle r="6.00" fill="#fff"/><circle r="4.68" fill="#3b7ded"/></g></svg>
<svg class="a" style="left:720px;top:12px" width="25" height="25" viewBox="0 0 25 25"><defs><linearGradient id="eg" x1="0" y1="0" x2="1" y2="1"><stop offset="0" stop-color="#35c1f1"/><stop offset=".5" stop-color="#1f9ad6"/><stop offset="1" stop-color="#0f5fb4"/></linearGradient></defs><path d="M12.500 0.500c7 0 12 5 12 11 0 4-3 6.500-6.500 6.500-2.500 0-4-1-4-2.500 0-1 1-1.500 1-3 0-2.500-2.500-4.500-5.500-4.500-4 0-7.500 3-8.500 6 .5-7.500 5-13.500 11.500-13.500z" fill="#3fc0a8"/><path d="M1 14c1-4 4.500-6.500 8.500-6.500 3 0 5.500 2 5.500 4.500 0 1.500-1 2-1 3 0 1.500 1.500 2.500 4 2.500 2 0 4-1 5.500-3-1 6-6 10-11.500 10-6.500 0-11-4.500-11-10.500z" fill="url(#eg)"/><circle cx="13" cy="13" r="2.600" fill="#1f2020"/><rect x="0.500" y="15" width="12" height="9" rx="1" fill="#c8791f"/><rect x="0.500" y="15" width="12" height="3.500" fill="#e39a35"/><rect x="4.500" y="13.500" width="4" height="2" fill="none" stroke="#8a4e10" stroke-width="1"/><rect x="5.500" y="17.500" width="2" height="2" fill="#5a3208"/></svg>
<svg class="a" style="left:764px;top:12px" width="25" height="24" viewBox="0 0 25 24"><rect x="6" y="0.500" width="18" height="22" rx="1.500" fill="#2b7cd3"/><rect x="6" y="0.500" width="18" height="5.500" fill="#41a5ee"/><rect x="6" y="11.500" width="18" height="5.500" fill="#185abd"/><rect x="6" y="17" width="18" height="5.500" fill="#103f91"/><rect x="0" y="5" width="13" height="13" rx="1.500" fill="#185abd"/><path d="M2.500 8l1.800 7 2.200-6 2.200 6 1.800-7" fill="none" stroke="#fff" stroke-width="1.500"/></svg>
<svg class="a" style="left:808px;top:12px" width="25" height="24" viewBox="0 0 25 24"><circle cx="14" cy="12" r="11" fill="#ed6c47"/><path d="M14 1a11 11 0 0 1 11 11h-11z" fill="#ff8f6b"/><path d="M3 12h22a11 11 0 0 1-22 0z" fill="#d35230"/><rect x="0" y="5.500" width="13" height="13" rx="1.500" fill="#c43e1c"/><path d="M4.500 15.500v-7h2.800a2.200 2.200 0 0 1 0 4.400h-2.800" fill="none" stroke="#fff" stroke-width="1.600"/></svg>
<svg class="a" style="left:852px;top:12px" width="24" height="24" viewBox="0 0 24 24"><rect x="0" y="0" width="24" height="24" rx="4" fill="#fff"/><text x="12" y="15.500" font-family="Liberation Sans,sans-serif" font-size="16" font-weight="bold" fill="#111" text-anchor="middle">G</text><path d="M4.500 18.500l15-1.500v2.500l-15 1.500z" fill="#f5d90a"/></svg>
<svg class="a" style="left:892px;top:7px" width="34" height="32" viewBox="0 0 34 32"><g transform="translate(15 17)"><circle r="12" fill="#fff"/><path d="M0 0L-10.39 -6.00A12 12 0 0 1 10.39 -6.00z" fill="#e33b2e"/><path d="M0 0L10.39 -6.00A12 12 0 0 1 0 12z" fill="#fbc116"/><path d="M0 0L0 12A12 12 0 0 1 -10.39 -6.00z" fill="#2da94f"/><circle r="6.00" fill="#fff"/><circle r="4.68" fill="#3b7ded"/></g><circle cx="25" cy="7.500" r="7" fill="#2a2a2a"/><circle cx="25" cy="5.500" r="2.600" fill="#c8a08a"/><path d="M20.500 12.500c.5-3 2.500-4 4.500-4s4 1 4.500 4a7 7 0 0 1-9 0z" fill="#3d5a80"/></svg>
<div class="a" style="left:904px;top:40px;width:6px;height:3px;border-radius:1.500px;background:#8a8a8a"></div>
<div class="a" style="left:932px;top:4px;width:40px;height:40px;border-radius:4px;background:#323232;border:1px solid #3e3e3e"></div>
<svg class="a" style="left:940px;top:11px" width="26" height="28" viewBox="0 0 26 28"><polygon points="8.5,1.4 13.3,4.2 13.3,9.8 8.5,12.6 3.7,9.8 3.7,4.2" fill="#f7941d"/><polygon points="18.0,8.9 22.8,11.7 22.8,17.3 18.0,20.1 13.2,17.3 13.2,11.7" fill="#1b5a94"/><polygon points="6.5,14.1 11.2,16.8 11.2,22.2 6.5,24.9 1.8,22.2 1.8,16.8" fill="#fff"/></svg>
<div class="a" style="left:944px;top:40px;width:17px;height:3px;border-radius:1.500px;background:#d8c48a"></div>
<svg class="a" style="left:984px;top:12px" width="25" height="25" viewBox="0 0 25 25"><path d="M12 1c7 0 11.500 4.500 11.500 10 0 4-3 5.500-6 5.500-2 0-3 1-3 2.500 0 1 .8 1.500.8 2.800 0 1.500-1.500 2.200-3.300 2.200-6 0-11.500-4.500-11.500-11.500s5-11.500 11.500-11.500z" fill="#2fa4e7"/><circle cx="6.500" cy="12" r="2" fill="#e8452c"/><circle cx="9.500" cy="6.500" r="2" fill="#f5b916"/><circle cx="15.500" cy="5.500" r="2" fill="#3fba54"/><path d="M19 6.500l2.500-1.500v9h-2.500z" fill="#f0d9a8"/><path d="M19.500 14h2v10h-2z" fill="#c8873c"/></svg>
<svg class="a" style="left:1086px;top:18px" width="12" height="10" viewBox="0 0 12 10"><path d="M1.500 8l4.500-5 4.500 5" fill="none" stroke="#fff" stroke-width="1.600" stroke-linecap="round" stroke-linejoin="round"/></svg>
<svg class="a" style="left:1116px;top:15px" width="17" height="17" viewBox="0 0 17 17"><rect x="0" y="0" width="17" height="17" rx="3.500" fill="#fff"/><path d="M5 4.500l5-1.500v9l-5 1.500z" fill="#7fd0ff"/><path d="M8 5.500l5 1.500v6l-5-1.500z" fill="#1f8fe8"/></svg>
<svg class="a" style="left:1148px;top:15px" width="17" height="17" viewBox="0 0 17 17"><rect x="0" y="0" width="8.500" height="8.500" fill="#f08a1a"/><rect x="8.500" y="0" width="8.500" height="8.500" fill="#d8281c"/><rect x="0" y="8.500" width="8.500" height="8.500" fill="#3aa637"/><rect x="8.500" y="8.500" width="8.500" height="8.500" fill="#1e7fd6"/><circle cx="8.500" cy="5" r="2" fill="#f5c21a"/><circle cx="12" cy="8.500" r="2" fill="#d8281c"/><circle cx="5" cy="12" r="1.800" fill="#7ac943"/></svg>
<svg class="a" style="left:1179px;top:15px" width="19" height="18" viewBox="0 0 19 18"><rect x="1" y="1.500" width="13" height="10" rx="1" fill="none" stroke="#fff" stroke-width="1.400"/><path d="M7.500 11.500v3.500M4 15.500h7" stroke="#fff" stroke-width="1.400"/><rect x="12.500" y="0.500" width="4.500" height="6" rx="1" fill="#1f2020" stroke="#fff" stroke-width="1.200"/><path d="M14.800 6.500v9.500" stroke="#fff" stroke-width="1.200"/></svg>
<svg class="a" style="left:1204px;top:16px" width="17" height="16" viewBox="0 0 17 16"><path d="M1 5.500h3l4-4v13l-4-4h-3z" fill="none" stroke="#fff" stroke-width="1.300" stroke-linejoin="round"/><path d="M10.500 5.500c1 1.200 1 3.800 0 5" fill="none" stroke="#fff" stroke-width="1.200"/><path d="M12.800 3.500c2 2.300 2 6.700 0 9" fill="none" stroke="#fff" stroke-width="1.200"/><path d="M15 1.800c2.500 3.200 2.500 9.200 0 12.400" fill="none" stroke="#777" stroke-width="1.100"/></svg>
<svg class="a" style="left:1227px;top:18px" width="19" height="12" viewBox="0 0 19 12"><rect x="1" y="1" width="14.500" height="10" rx="2.500" fill="none" stroke="#fff" stroke-width="1.400"/><rect x="3" y="3" width="7" height="6" rx="1" fill="#fff"/><path d="M17 4.500v3" stroke="#fff" stroke-width="1.800" stroke-linecap="round"/></svg>
<span class="t" id="tk1" style="right:43.500px;top:11px;font-size:12px;color:#fff;letter-spacing:-.3px">1:21 PM</span>
<span class="t" id="tk2" style="right:43.500px;top:27px;font-size:12px;color:#fff">12/21/2024</span>
<svg class="a" style="left:1331px;top:17px" width="15" height="16" viewBox="0 0 15 16"><path d="M7.500 0.500c3 0 5 2.200 5 5v4l1.800 2.800h-13.600l1.800-2.800v-4c0-2.800 2-5 5-5z" fill="#eee4ac"/><path d="M5.500 13.500h4a2 2 0 0 1-4 0z" fill="#e8c896"/></svg>
</div>
</body>
</html>
